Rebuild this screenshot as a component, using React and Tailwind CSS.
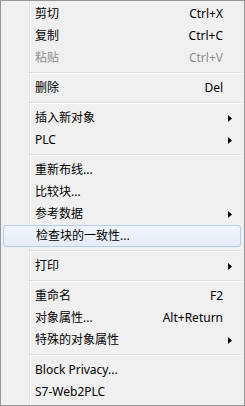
import React from 'react';

const items = [
  { label: '剪切', shortcut: 'Ctrl+X' },
  { label: '复制', shortcut: 'Ctrl+C' },
  { label: '粘贴', shortcut: 'Ctrl+V', disabled: true },
  { sep: true },
  { label: '删除', shortcut: 'Del' },
  { sep: true },
  { label: '插入新对象', sub: true },
  { label: 'PLC', sub: true },
  { sep: true },
  { label: '重新布线...' },
  { label: '比较块...' },
  { label: '参考数据', sub: true },
  { label: '检查块的一致性...', active: true },
  { sep: true },
  { label: '打印', sub: true },
  { sep: true },
  { label: '重命名', shortcut: 'F2' },
  { label: '对象属性...', shortcut: 'Alt+Return' },
  { label: '特殊的对象属性', sub: true },
  { sep: true },
  { label: 'Block Privacy...' },
  { label: 'S7-Web2PLC' },
];

const Arrow = () => (
  <svg width="4" height="7" viewBox="0 0 4 7" className="absolute right-[10px] top-[8px]">
    <path d="M0 0 L4 3.5 L0 7 Z" fill="#000" />
  </svg>
);

const MenuRow = ({ item }) => {
  if (item.sep) {
    return (
      <div className="h-[8px] pt-[3px] pl-[27px]">
        <div className="h-px bg-[#e0e0e0]" />
        <div className="h-px bg-white" />
      </div>
    );
  }

  return (
    <div
      className={
        'relative flex h-[22px] items-center pl-[32px] pr-[19px] ' +
        (item.active
          ? 'rounded-[3px] border border-[#b1cdf0] bg-[linear-gradient(#f1f5fb,#e4ecf8)] mr-px pl-[31px]'
          : '') +
        (item.disabled ? ' text-[#8d8d8d]' : ' text-black')
      }
    >
      <span className="flex-1 whitespace-nowrap">{item.label}</span>
      {item.shortcut && <span className="whitespace-nowrap">{item.shortcut}</span>}
      {item.sub && <Arrow />}
    </div>
  );
};

export default function App() {
  return (
    <div className="w-[245px] h-[406px] border border-[#979797] bg-[#f0f0f0] p-[2px] text-[12px] leading-none font-['Noto_Sans','Noto_Sans_CJK_SC',sans-serif] bg-[linear-gradient(to_right,transparent_28px,#e2e3e3_28px,#e2e3e3_29px,#ffffff_29px,#ffffff_30px,transparent_30px)]">
      {items.map((item, i) => (
        <MenuRow key={i} item={item} />
      ))}
    </div>
  );
}
